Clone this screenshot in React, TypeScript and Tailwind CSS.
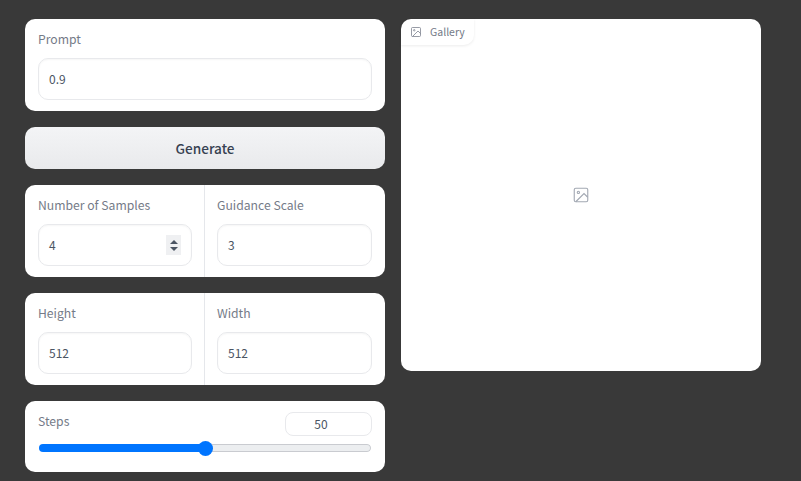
import { ReactNode } from "react";

const font = { fontFamily: '"Noto Sans CJK SC", "Noto Sans", sans-serif' };

function ImageIcon({ className }: { className: string }) {
  return (
    <svg viewBox="0 0 24 24" fill="none" stroke="currentColor" strokeWidth="1.5" className={className}>
      <rect x="3" y="3" width="18" height="18" rx="2" />
      <circle cx="8.5" cy="8.5" r="1.5" />
      <path d="M21 15l-5-5L5 21" />
    </svg>
  );
}

function Label({ children }: { children: ReactNode }) {
  return <div className="h-5 text-[12.2px] leading-5 text-[#757b88]">{children}</div>;
}

function Field({ label, value, spinner, className }: { label: string; value: string; spinner?: boolean; className: string }) {
  return (
    <div className={`pb-[11px] pt-[10px] ${className}`}>
      <Label>{label}</Label>
      <div className="mt-[9px] flex h-[42px] items-center justify-between rounded-[10px] border border-[#e8e9ec] px-[10px] text-[12px] leading-5 text-[#4b5563] shadow-[inset_0_1px_2px_rgba(0,0,0,0.04)]">
        <span className="pb-[1px]">{value}</span>
        {spinner && (
          <div className="flex h-5 w-[15px] flex-col items-center justify-center gap-[3px] bg-[#eff0f2]">
            <div className="h-0 w-0 border-x-[4px] border-b-[4px] border-x-transparent border-b-[#4b5563]" />
            <div className="h-0 w-0 border-x-[4px] border-t-[4px] border-x-transparent border-t-[#4b5563]" />
          </div>
        )}
      </div>
    </div>
  );
}

function Row({ children }: { children: ReactNode }) {
  return <div className="flex rounded-[10px] bg-white">{children}</div>;
}

export default function App() {
  return (
    <div style={font} className="flex h-[481px] gap-4 overflow-hidden bg-[#393939] pl-[25px] pt-[19px] antialiased">
      <div className="flex w-[360px] flex-col gap-4">
        <Row>
          <Field label="Prompt" value="0.9" className="w-full px-[13px]" />
        </Row>
        <button className="h-[42px] rounded-[10px] bg-gradient-to-b from-[#f3f4f6] to-[#e9eaec] text-[13.6px] font-medium text-[#374151]">
          Generate
        </button>
        <Row>
          <Field label="Number of Samples" value="4" spinner className="w-1/2 border-r border-[#e5e7eb] pl-[13px] pr-3" />
          <Field label="Guidance Scale" value="3" className="w-1/2 pl-3 pr-[13px]" />
        </Row>
        <Row>
          <Field label="Height" value="512" className="w-1/2 border-r border-[#e5e7eb] pl-[13px] pr-3" />
          <Field label="Width" value="512" className="w-1/2 pl-3 pr-[13px]" />
        </Row>
        <div className="h-[71px] rounded-[10px] bg-white px-[13px] pt-[10px]">
          <div className="flex items-start justify-between">
            <Label>Steps</Label>
            <div className="mt-[1px] flex h-6 w-[87px] items-center justify-center rounded-lg border border-[#e8e9ec] pr-[15px] text-[12px] text-[#4b5563]">
              50
            </div>
          </div>
          <div className="relative mt-2 ml-[1px] flex h-2 w-[332px] overflow-hidden rounded-full">
            <div className="h-full w-1/2 bg-[#0075ff]" />
            <div className="h-full flex-1 rounded-r-full border border-l-0 border-[#c9cbd0] bg-[#eceef0]" />
          </div>
          <div className="relative">
            <div className="absolute left-[160px] top-[-11px] h-[15px] w-[15px] rounded-full bg-[#0075ff]" />
          </div>
        </div>
      </div>
      <div className="h-[352px] w-[360px] rounded-[10px] bg-white">
        <div className="flex h-[26px] w-[73px] items-center gap-2 rounded-br-[10px] rounded-tl-[10px] pl-[9px] text-[10.5px] text-[#757b88] shadow-[0_1px_3px_rgba(0,0,0,0.08)]">
          <ImageIcon className="h-3 w-3" />
          Gallery
        </div>
        <div className="flex h-[300px] items-center justify-center text-[#a3a9b3]">
          <ImageIcon className="h-[18px] w-[18px]" />
        </div>
      </div>
    </div>
  );
}
